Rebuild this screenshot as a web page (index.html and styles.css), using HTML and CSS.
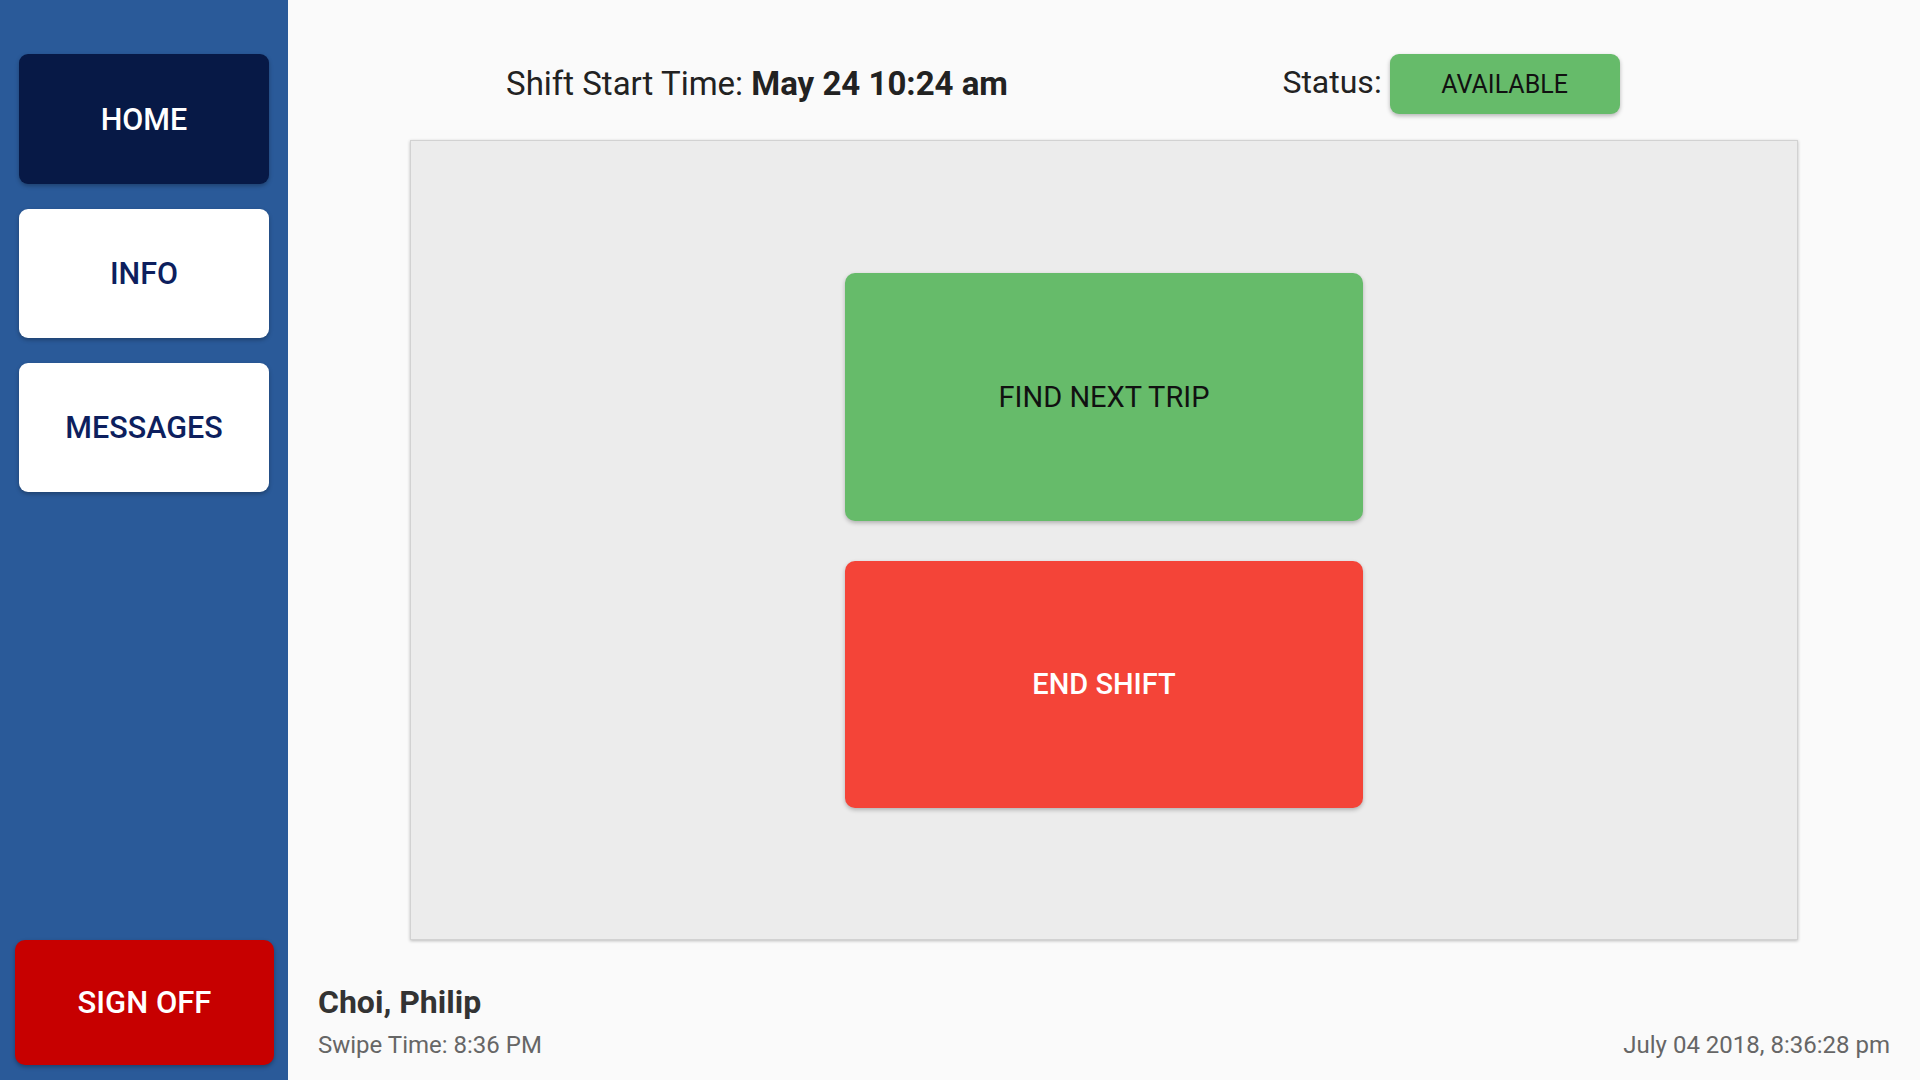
FILE: index.html
```html
<!DOCTYPE html>
<html lang="en">
<head>
<meta charset="utf-8">
<title>Driver Home</title>
<link rel="stylesheet" href="styles.css">
</head>
<body>
<div class="app">
  <aside class="sidebar">
    <nav class="nav">
      <button class="nav-btn active">HOME</button>
      <button class="nav-btn">INFO</button>
      <button class="nav-btn">MESSAGES</button>
    </nav>
    <button class="signoff">SIGN OFF</button>
  </aside>
  <main class="main">
    <header class="header">
      <div class="header-cell">
        <span class="shift">Shift Start Time: <strong>May 24 10:24 am</strong></span>
      </div>
      <div class="header-cell">
        <span class="status-label">Status:</span>
        <span class="status-badge">AVAILABLE</span>
      </div>
    </header>
    <section class="panel">
      <button class="action find">FIND NEXT TRIP</button>
      <button class="action end">END SHIFT</button>
    </section>
    <footer class="footer">
      <div class="user">
        <div class="user-name">Choi, Philip</div>
        <div class="user-swipe">Swipe Time: 8:36 PM</div>
      </div>
      <div class="clock">July 04 2018, 8:36:28 pm</div>
    </footer>
  </main>
</div>
</body>
</html>
```
FILE: styles.css
```css
* { box-sizing: border-box; }
html, body { margin: 0; padding: 0; }
body {
  font-family: Roboto, "Liberation Sans", Arial, sans-serif;
  background: #fafafa;
  width: 1920px;
  height: 1080px;
  overflow: hidden;
}
button { font-family: inherit; border: none; cursor: pointer; }

.app { display: flex; width: 1920px; height: 1080px; }

.sidebar {
  width: 288px;
  flex: 0 0 288px;
  background: #2a5a99;
  display: flex;
  flex-direction: column;
  justify-content: space-between;
  padding: 54px 0 15px 0;
}
.nav { display: flex; flex-direction: column; gap: 25px; padding: 0 19px; }
.nav-btn {
  width: 250px;
  height: 129px;
  border-radius: 9px;
  background: #ffffff;
  color: #0d1f5e;
  font-size: 30.5px;
  font-weight: 500;
  box-shadow: 0 2px 4px rgba(0,0,0,0.28);
}
.nav-btn.active { background: #071946; color: #ffffff; height: 130px; }
.signoff {
  margin: 0 14px 0 15px;
  height: 125px;
  border-radius: 10px;
  background: #c70000;
  color: #ffffff;
  font-size: 31px;
  font-weight: 500;
  box-shadow: 0 2px 4px rgba(0,0,0,0.3);
}

.main {
  flex: 1;
  display: flex;
  flex-direction: column;
  align-items: center;
}
.header {
  width: 1388px;
  margin-top: 54px;
  height: 60px;
  display: grid;
  grid-template-columns: 1fr 1fr;
}
.header-cell { display: flex; align-items: center; justify-content: center; gap: 8px; }
.shift { font-size: 33px; line-height: 40px; color: #222222; }
.shift strong { font-weight: 700; }
.status-label { font-size: 32px; line-height: 40px; color: #222222; margin-top: -5px; }
.status-badge {
  width: 230px;
  height: 60px;
  border-radius: 9px;
  background: #66bb6a;
  color: #111111;
  font-size: 25px;
  display: flex;
  align-items: center;
  justify-content: center;
  box-shadow: 0 2px 4px rgba(0,0,0,0.28);
}

.panel {
  margin-top: 26px;
  width: 1388px;
  height: 800px;
  background: #ececec;
  border: 1px solid #d2d2d2;
  box-shadow: 0 1px 3px rgba(0,0,0,0.25);
  display: flex;
  flex-direction: column;
  align-items: center;
  justify-content: center;
  gap: 40px;
}
.action {
  width: 518px;
  height: 248px;
  border-radius: 10px;
  font-size: 29px;
  box-shadow: 0 2px 4px rgba(0,0,0,0.25);
}
.action.find { background: #66bb6a; color: #111111; font-weight: 400; }
.action.end { background: #f44438; color: #ffffff; font-weight: 500; height: 247px; }

.footer {
  flex: 1;
  width: 100%;
  display: flex;
  justify-content: space-between;
  align-items: flex-end;
  padding: 0 30px 21px 30px;
}
.user-name { font-size: 32px; line-height: 38px; font-weight: 700; color: #333333; }
.user-swipe { font-size: 24px; line-height: 28px; color: #666666; margin-top: 10px; }
.clock { font-size: 24px; line-height: 28px; color: #666666; }
```
